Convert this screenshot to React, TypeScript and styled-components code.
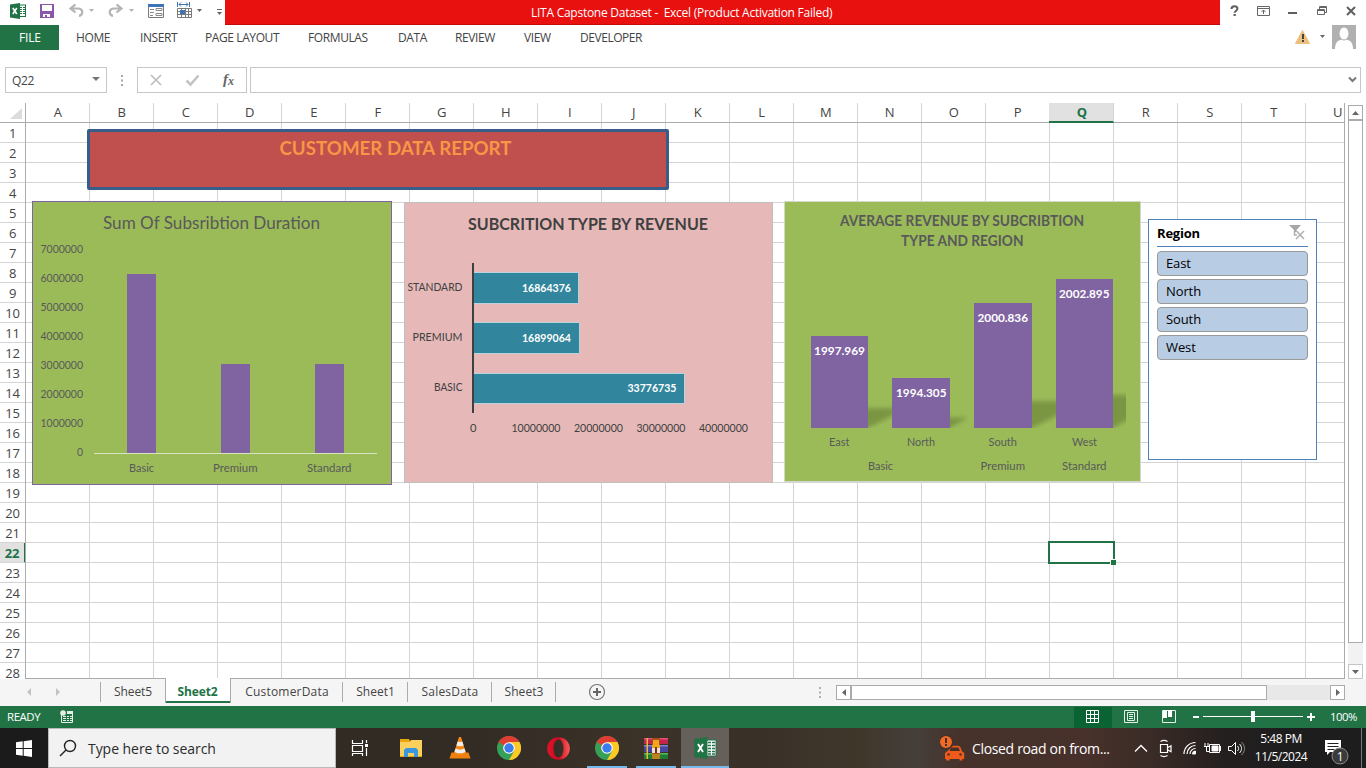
import React from 'react';
import styled, { createGlobalStyle, css } from 'styled-components';

const UI = `"Open Sans", "Noto Sans", sans-serif`;
const BODY = `Lato, "Noto Sans", sans-serif`;
const GREEN = '#217346';

const Global = createGlobalStyle`
  html, body { margin: 0; padding: 0; background: #fff; overflow: hidden; }
  * { box-sizing: border-box; }
`;

const Screen = styled.div`
  width: 1366px;
  height: 768px;
  display: flex;
  flex-direction: column;
  background: #fff;
  font-family: ${UI};
  font-size: 12px;
  color: #444;
  overflow: hidden;
  white-space: nowrap;
`;

const Spaced = styled.span<{ $ls?: number }>`
  letter-spacing: ${(p) => p.$ls ?? 0}px;
`;

/* ---------- title bar ---------- */
const TitleBar = styled.header`
  height: 25px;
  display: flex;
  flex: none;
`;
const QuickAccess = styled.div`
  width: 225px;
`;
const TitleText = styled.div`
  width: 995px;
  height: 25px;
  padding-left: 306px;
  background: #e91010;
  border-bottom: 1px solid #c40a0a;
  color: #fff;
  line-height: 25px;
  white-space: pre;
  letter-spacing: -0.26px;
`;
const WindowButtons = styled.div`
  flex: 1;
`;

/* ---------- ribbon tabs ---------- */
const RibbonTabs = styled.nav`
  height: 25px;
  display: flex;
  flex: none;
  line-height: 25px;
`;
const FileTab = styled.div`
  width: 59px;
  padding-left: 19px;
  background: ${GREEN};
  color: #fff;
  margin-right: 17px;
`;
const RibbonTab = styled.div<{ $w: number; $ls: number }>`
  width: ${(p) => p.$w}px;
  letter-spacing: ${(p) => p.$ls}px;
`;
const Account = styled.div`
  margin-left: auto;
  width: 76px;
`;

/* ---------- formula bar ---------- */
const FormulaBar = styled.div`
  height: 53px;
  flex: none;
  display: flex;
  padding: 17px 5px 0 5px;
`;
const FieldBox = styled.div<{ $w: number; $ml: number }>`
  width: ${(p) => p.$w}px;
  height: 26px;
  margin-left: ${(p) => p.$ml}px;
  border: 1px solid #c6c6c6;
  display: flex;
  align-items: center;
`;
const NameText = styled.span`
  padding-left: 6px;
  width: 86px;
  letter-spacing: -0.3px;
`;
const Dots = styled.div`
  width: 3px;
  margin-left: 14px;
  padding-top: 7px;
  height: 26px;
`;

/* ---------- sheet ---------- */
const SheetArea = styled.main`
  flex: none;
  height: 576px;
  display: flex;
`;
const RowHeads = styled.div`
  width: 26px;
  height: 576px;
  overflow: hidden;
  border-right: 1px solid #ababab;
`;
const Corner = styled.div`
  height: 20px;
  border-bottom: 1px solid #ababab;
`;
const RowHead = styled.div<{ $on?: boolean }>`
  height: 20px;
  line-height: 20px;
  font-size: 13px;
  text-align: center;
  letter-spacing: -0.3px;
  border-bottom: 1px solid #d4d4d4;
  margin-right: ${(p) => (p.$on ? -1 : 0)}px;
  ${(p) => p.$on && css`
    background: #e1e1e1;
    color: ${GREEN};
    font-weight: 700;
    border-right: 2px solid ${GREEN};
  `}
`;
const SheetMain = styled.div`
  width: 1319px;
  display: flex;
  flex-direction: column;
  overflow: hidden;
  border-right: 1px solid #ababab;
`;
const ColHeads = styled.div`
  display: flex;
  height: 20px;
  flex: none;
  border-bottom: 1px solid #ababab;
`;
const ColHead = styled.div<{ $on?: boolean }>`
  width: 64px;
  height: 19px;
  flex: none;
  padding-left: 0.5px;
  font-size: 13px;
  line-height: 19px;
  text-align: center;
  border-right: 1px solid #d4d4d4;
  ${(p) => p.$on && css`
    background: #e1e1e1;
    color: ${GREEN};
    font-weight: 700;
    height: 20px;
    border-bottom: 2px solid ${GREEN};
    margin-left: -1px;
    padding-left: 2px;
    width: 65px;
  `}
`;
const Cells = styled.div`
  position: relative;
  flex: 1;
  border-bottom: 1px solid #ababab;
  background-image:
    repeating-linear-gradient(to right, transparent 0 63px, #d4d4d4 63px 64px),
    repeating-linear-gradient(to bottom, transparent 0 19px, #d4d4d4 19px 20px);
`;
/* Objects that float on the sheet; coordinates are relative to cell A1. */
const Floating = styled.div<{ $x: number; $y: number; $w: number; $h: number }>`
  position: absolute;
  left: ${(p) => p.$x}px;
  top: ${(p) => p.$y}px;
  width: ${(p) => p.$w}px;
  height: ${(p) => p.$h}px;
  svg { display: block; }
`;
const Banner = styled(Floating)`
  background: #c0504d;
  border: 3px solid #385d8a;
  border-radius: 2px;
`;
const Slicer = styled(Floating)`
  background: #fff;
  border: 1px solid #4f81bd;
  padding: 0 8px;
  color: #000;
  font-size: 13px;
`;
const SlicerHead = styled.div`
  height: 27px;
  display: flex;
  justify-content: space-between;
  border-bottom: 1px solid #4f81bd;
  font-weight: 700;
  line-height: 27px;
  margin-bottom: 4px;
`;
const SlicerItem = styled.div<{ $ls: number }>`
  height: 25px;
  margin-bottom: 3px;
  padding-left: 8px;
  line-height: 23px;
  background: #b8cce4;
  border: 1px solid #999;
  border-radius: 4px;
  letter-spacing: ${(p) => p.$ls}px;
`;
const Selection = styled(Floating)`
  border: 2px solid ${GREEN};
`;
const Handle = styled(Floating)`
  background: ${GREEN};
  border: 1px solid #fff;
  border-right: 0;
  border-bottom: 0;
`;
const VScroll = styled.div`
  width: 21px;
  padding: 2px 3px 0;
  display: flex;
  flex-direction: column;
`;
const ScrollButton = styled.div<{ $light?: boolean }>`
  width: 15px;
  height: 15px;
  flex: none;
  background: #fff;
  border: 1px solid ${(p) => (p.$light ? '#c6c6c6' : '#ababab')};
  svg { display: block; }
`;
const VThumb = styled.div`
  height: 523px;
  width: 15px;
  border: 1px solid #ababab;
`;
const VTrack = styled.div`
  width: 15px;
  height: 21px;
  background: #f2f2f2;
`;

/* ---------- sheet tabs ---------- */
const TabBar = styled.div`
  height: 27px;
  flex: none;
  background: #f5f5f5;
  display: flex;
  font-size: 12px;
`;
const SheetTab = styled.div<{ $w: number; $ls: number; $on?: boolean; $sep?: boolean }>`
  width: ${(p) => p.$w}px;
  height: 24px;
  line-height: 25px;
  text-align: center;
  letter-spacing: ${(p) => p.$ls}px;
  background-image: ${(p) => (p.$sep ? 'linear-gradient(#ababab, #ababab)' : 'none')};
  background-size: 1px 20px;
  background-repeat: no-repeat;
  background-position: right 3px;
  svg { display: block; }
  ${(p) => p.$on && css`
    margin-top: -1px;
    height: 25px;
    line-height: 27px;
    padding-right: 1px;
    background: #fff;
    color: ${GREEN};
    font-weight: 700;
    border: solid #ababab;
    border-width: 0 1px 0;
    box-shadow: inset 0 -2px ${GREEN};
    z-index: 1;
  `}
`;
const AddSheet = styled.div`
  width: 280px;
  padding: 4px 0 0 32px;
`;
const HScroll = styled.div`
  display: flex;
  margin-top: 6px;
  height: 15px;
  width: 509px;
  background: #e8e8e8;
`;
const HThumb = styled.div`
  width: 416px;
  background: #fff;
  border: 1px solid #ababab;
  margin-right: auto;
`;

/* ---------- status bar ---------- */
const StatusBar = styled.div`
  height: 22px;
  flex: none;
  background: ${GREEN};
  color: #fff;
  display: flex;
  align-items: center;
  font-size: 11.4px;
`;
const Ready = styled.span`
  padding: 0 0 1px 7px;
  width: 60px;
  letter-spacing: -0.4px;
`;
const StatusRight = styled.div`
  margin-left: auto;
  display: flex;
  align-items: center;
  height: 22px;
`;
const ZoomText = styled.span`
  width: 36px;
  margin-left: -36px;
  padding-bottom: 1px;
  letter-spacing: -0.5px;
`;

/* ---------- taskbar ---------- */
const Taskbar = styled.footer`
  height: 40px;
  flex: none;
  display: flex;
  color: #fff;
  background: linear-gradient(to right, #1b1b1b 0 48px, #322b23 336px, #332c25 480px, #3b3228 640px, #393128 760px,
    #40372b 860px, #453f3b 915px, #46322b 960px, #47312a 1090px, #3a2b26 1150px, #241f1f 1225px, #1d1d1e 1300px);
`;
const Start = styled.div`
  width: 48px;
  padding: 12px 0 0 16px;
`;
const Search = styled.div`
  width: 288px;
  background: #f2f2f2;
  border: 1px solid #b9b9b9;
  color: #2b2b2b;
  font-size: 14px;
  display: flex;
  align-items: center;
`;
const SearchText = styled.span`
  padding-left: 11px;
  letter-spacing: -0.05px;
`;
const AppSlot = styled.div<{ $running?: boolean; $active?: boolean; $first?: boolean }>`
  width: ${(p) => (p.$first ? 50 : 49)}px;
  height: 40px;
  display: flex;
  align-items: center;
  justify-content: center;
  padding-left: ${(p) => (p.$first ? 0 : 1)}px;
  padding-right: ${(p) => (p.$first ? 2 : 0)}px;
  ${(p) => p.$running && css`
    background: linear-gradient(#76b9ed, #76b9ed) 5px bottom / 40px 2px no-repeat;
  `}
  ${(p) => p.$active && css`
    background: linear-gradient(#76b9ed, #76b9ed) left bottom / 48px 2px no-repeat, #65605a;
    width: 48px;
    margin-left: 1px;
    padding-left: 0;
  `}
`;
const News = styled.div`
  display: flex;
  align-items: center;
  margin-left: auto;
  font-size: 14px;
  width: 190px;
  gap: 7px;
  letter-spacing: -0.34px;
`;
const Tray = styled.div`
  width: 119px;
`;
const Clock = styled.div`
  width: 64px;
  padding-top: 2px;
  line-height: 18px;
  font-size: 12px;
  text-align: center;
  letter-spacing: -0.5px;
`;
const Notice = styled.div`
  width: 53px;
  padding-left: 11px;
`;

/* ---------- drawings ---------- */
type TProps = {
  x: number; y: number; w: number; s?: number; c?: string; b?: boolean; children: string;
};
/* Chart text, placed by its left edge and baseline and set to a known width. */
const T = ({ x, y, w, s = 11.7, c = '#595959', b, children }: TProps) => (
  <text x={x} y={y} textLength={w} lengthAdjust="spacingAndGlyphs" fontSize={s} fill={c}
    fontWeight={b ? 700 : 400} fontFamily={BODY}>{children}</text>
);

const XlIcon = () => (
  <svg width="23" height="22" viewBox="0 0 23 22">
    <path d="M12 3h10v16H12z" fill="#fff" stroke={GREEN} />
    <path d="M14 5.500h3M18 5.500h3M14 8.500h3M18 8.500h3M14 11.500h3M18 11.500h3M14 14.500h3M18 14.500h3M14 17h3M18 17h3" stroke={GREEN} strokeWidth="1.500" />
    <path d="M0 2 13.500 0v22L0 20z" fill={GREEN} />
    <path d="m4 7 5 8M9 7l-5 8" stroke="#fff" strokeWidth="1.900" />
  </svg>
);

const QuickIcons = () => (
  <svg width="225" height="25" fill="none">
    <g transform="translate(10 3)">
      <rect x="8" y="2" width="7.5" height="11.5" fill="#fff" stroke={GREEN} />
      <path d="M10 4.5h2M13 4.5h2M10 6.5h2M13 6.5h2M10 8.5h2M13 8.5h2M10 10.5h2M13 10.5h2" stroke={GREEN} />
      <path d="M0 1.4 10 0v16L0 14.4z" fill={GREEN} />
      <path d="m2.8 5 4 6M6.8 5l-4 6" stroke="#fff" strokeWidth="1.6" />
    </g>
    <path d="M40 4h14v14H40z" fill="#8a56ae" />
    <path d="M42 5h10v6H42zM43 14h7v3h-3v-2h-2v2h-2z" fill="#fff" />
    <path d="M75.500 4.500 70.500 8.500 75.500 12.500M71 8.500h7c5.500 0 5.500 7 1 7.300" stroke="#b3b3b3" strokeWidth="2.200" />
    <path d="M89 9h5l-2.500 3z" fill="#b3b3b3" />
    <path d="M116.500 4.500 121.500 8.500 116.500 12.500M121 8.500h-7c-5.500 0-5.500 7-1 7.300" stroke="#b3b3b3" strokeWidth="2.200" />
    <path d="M129 9h5l-2.500 3z" fill="#b3b3b3" />
    <path d="M148.500 4.500h15v13h-15z" stroke="#7b7b7b" />
    <path d="M148 4h16v3h-16z" fill="#3f74b4" />
    <path d="M150 9.500h4M150 12.500h4M150 15.500h3M156 8.500h6v2h-6zM156 13.500h6v2h-6z" stroke="#8a8a8a" />
    <path d="M177.500 2v5M189.500 2v5M179 4.500h9M181 2.500l-2 2 2 2M186 2.500l2 2-2 2" stroke="#3f74b4" />
    <path d="M177.500 8.500h14v9h-14zM177.500 11.500h14M177.500 14.500h14M181.500 8v10M185.500 8v10M188.500 8v10" stroke="#7b7b7b" />
    <path d="M180 10h5v4h-5z" fill="#3f74b4" />
    <path d="M197 9h5l-2.500 3z" fill="#666" />
    <path d="M217 9.500h5" stroke="#666" />
    <path d="M217 12h5l-2.500 3z" fill="#666" />
  </svg>
);

const WindowIcons = () => (
  <svg width="146" height="25" fill="none">
    <path d="M11.500 9c0-3.500 6-3.500 6-.4 0 2.200-2.800 2-2.800 4.200" stroke="#5f5f5f" strokeWidth="2" />
    <path d="M13.500 14h2.300v2h-2.300z" fill="#5f5f5f" />
    <path d="M37.500 6.500h12v9h-12zM37.500 8.500h12M43.500 14v-4M41.500 12l2-2 2 2" stroke="#666" />
    <path d="M68 13h9" stroke="#5f5f5f" strokeWidth="2" />
    <path d="M97.500 9.500h7v5h-7zM97 10.500h8M99.500 9V6.500h7v6H105M99 7.500h8" stroke="#666" />
    <path d="m127 7 8 8M135 7l-8 8" stroke="#5f5f5f" strokeWidth="2" />
  </svg>
);

const AccountIcons = () => (
  <svg width="76" height="25" fill="none">
    <path d="M12.500 5.500 19.500 18.500h-14z" fill="#ecc07c" stroke="#ecc07c" strokeLinejoin="round" />
    <path d="M13 9v5M13 15v2" stroke="#444" strokeWidth="2" />
    <path d="M30 10h5l-2.500 3z" fill="#666" />
    <path d="M42 0h24v24H42z" fill="#b0b0b0" />
    <path d="M45 24c0-7 3-9 9-10 6 1 9 3 9 10z" fill="#fff" />
    <ellipse cx="54" cy="8.500" rx="5" ry="6.500" fill="#fff" stroke="#b0b0b0" />
  </svg>
);

const DotMarks = () => (
  <svg width="3" height="12"><path d="M0 0h2v2H0zM0 4.500h2v2H0zM0 9h2v2H0z" fill="#a6a6a6" /></svg>
);

const Arrow = ({ d, w = 13, h = 13, c = '#666' }: { d: string; w?: number; h?: number; c?: string }) => (
  <svg width={w} height={h}><path d={d} fill={c} /></svg>
);

const DurationChart = () => (
  <svg width="360" height="284" viewBox="32 201 360 284">
    <rect x="32.500" y="201.500" width="359" height="283" fill="#9bbb59" stroke="#8064a2" />
    <T x={103} y={229} w={217} s={18}>Sum Of Subsribtion Duration</T>
    {[7, 6, 5, 4, 3, 2, 1].map((n, i) => (
      <T key={n} x={40.500} y={253 + 29 * i} w={42.500}>{`${n}000000`}</T>
    ))}
    <T x={77} y={456} w={6}>0</T>
    <path d="M127 274h29v179h-29zM221 364h29v89h-29zM315 364h29v89h-29z" fill="#8064a2" />
    <path d="M94 453.500h283" stroke="#d9e3c0" />
    <T x={129} y={472} w={25}>Basic</T>
    <T x={213} y={472} w={44.500}>Premium</T>
    <T x={307} y={472} w={44.500}>Standard</T>
  </svg>
);

const RevenueChart = () => {
  const dark = '#404040';
  return (
    <svg width="369" height="281" viewBox="404 202 369 281">
      <rect x="404.500" y="202.500" width="368" height="280" fill="#e6b9b8" stroke="#bfbfbf" />
      <T x={468} y={230} w={240} s={17.600} c={dark} b>SUBCRITION TYPE BY REVENUE</T>
      <g fill="#31859c" stroke="#b9d3da">
        <path d="M473.500 272.500h105v31h-105zM473.500 322.500h106v31h-106zM473.500 373.500h211v30h-211z" />
      </g>
      <path d="M473 263v150" stroke={dark} strokeWidth="2" />
      <T x={407.500} y={291} w={55} c={dark}>STANDARD</T>
      <T x={412.500} y={341} w={50} c={dark}>PREMIUM</T>
      <T x={434} y={391} w={28.500} c={dark}>BASIC</T>
      <T x={522} y={292} w={49} c="#fff" b>16864376</T>
      <T x={522} y={342} w={49} c="#fff" b>16899064</T>
      <T x={627.500} y={392} w={49} c="#fff" b>33776735</T>
      <T x={470} y={432} w={6.500} c={dark}>0</T>
      {[1, 2, 3, 4].map((n) => (
        <T key={n} x={449 + 62.500 * n} y={432} w={49} c={dark}>{`${n}0000000`}</T>
      ))}
    </svg>
  );
};

const RegionChart = () => (
  <svg width="357" height="281" viewBox="784 201 357 281">
    <defs>
      <filter id="soft" x="-30%" y="-30%" width="160%" height="160%"><feGaussianBlur stdDeviation="2.200" /></filter>
      <clipPath id="plot"><path d="M798 260h328v168H798z" /></clipPath>
    </defs>
    <rect x="784.500" y="201.500" width="356" height="280" fill="#9bbb59" stroke="#d4d8cc" />
    <T x={840} y={226} w={244} s={14.200} b>AVERAGE REVENUE BY SUBCRIBTION</T>
    <T x={901} y={246} w={122.500} s={14.200} b>TYPE AND REGION</T>
    <g clipPath="url(#plot)">
      <g fill="#76903f" opacity=".85" filter="url(#soft)">
        <path d="M811 428h57l40-20h-57zM892 428h58l18-10.500h-58zM974 428h58l54-27h-58zM1056 428h57l60-33h-80z" />
      </g>
    </g>
    <path d="M811 336h57v92h-57zM892 378h58v50h-58zM974 303h58v125h-58zM1056 279h57v149h-57z" fill="#8064a2" />
    <T x={814} y={355} w={51} c="#fff" b>1997.969</T>
    <T x={896} y={397} w={50.500} c="#fff" b>1994.305</T>
    <T x={977.500} y={322} w={50.500} c="#fff" b>2000.836</T>
    <T x={1059} y={298} w={50.500} c="#fff" b>2002.895</T>
    <T x={829} y={446} w={20.500}>East</T>
    <T x={907} y={446} w={28}>North</T>
    <T x={988.500} y={446} w={28.500}>South</T>
    <T x={1072} y={446} w={25}>West</T>
    <T x={868} y={470} w={25}>Basic</T>
    <T x={980.500} y={470} w={44.500}>Premium</T>
    <T x={1062} y={470} w={44.500}>Standard</T>
  </svg>
);

const StatusIcons = () => (
  <svg width="292" height="22" fill="none">
    <path d="M0 1h38v21H0z" fill="#0a6332" />
    <path d="M12.500 4.500h12v12h-12zM12.500 8.500h12M12.500 12.500h12M16.500 4v13M20.500 4v13" stroke="#fff" />
    <path d="M50.500 4.500h13v12h-13zM53.500 6.500h7v8h-7zM55 8.500h4M55 10.500h4M55 12.500h4" stroke="#e4efe8" />
    <path d="M88.500 4.500h13v12h-13z" stroke="#e4efe8" />
    <path d="M89 4h4v8h-4zM94 4h4v7h-4z" fill="#fff" />
    <path d="M119 11h6M233 11h8M237 7v8" stroke="#fff" strokeWidth="2" />
    <path d="M129 10.500h100" stroke="#fff" />
    <path d="M177 5h4v11h-4z" fill="#fff" />
  </svg>
);

const MacroIcon = () => (
  <svg width="14" height="14" fill="none">
    <path d="M1.500 5v7.500h11v-11H7" stroke="#e4efe8" />
    <path d="M7 1h6v3H7z" fill="#e4efe8" />
    <path d="M3 6.500h3M7 6.500h2M10 6.500h2M3 8.500h3M7 8.500h2M10 8.500h2M3 10.500h3M7 10.500h2M10 10.500h2" stroke="#e4efe8" />
    <circle cx="3" cy="3" r="2.800" fill="#e4efe8" />
  </svg>
);

const TaskView = () => (
  <svg width="18" height="18" fill="none" stroke="#fff">
    <path d="M1.500 1v3.500h10V1M1.500 6.500h10v6h-10zM1.500 17v-2.500h10V17M15.500 1v3M15.500 9v8" strokeWidth="1.200" />
    <path d="M14 5h3v3h-3z" fill="#fff" stroke="none" />
  </svg>
);
const Folder = () => (
  <svg width="22" height="20">
    <path d="M0 1h9l1 2h12v16H0z" fill="#e8a50c" />
    <path d="M0 4h10l1-2h11v16H0z" fill="#fbd05c" />
    <path d="M4 19v-7l2-2h10l2 2v7h-4v-4H8v4z" fill="#3a96dd" />
  </svg>
);
const Cone = () => (
  <svg width="22" height="22" viewBox="0 0 22 22">
    <path d="M2.500 15.500h17l2 6h-21z" fill="#f08010" />
    <path d="M10 0h2l5 16c-2 2-10 2-12 0z" fill="#f58a1a" />
    <path d="m8.700 4.500-1.300 4c2 1 5.200 1 7.200 0l-1.300-4c-1.500.7-3.100.7-4.600 0zM6.500 11.500l-1 3.200c3 2 8 2 11 0l-1-3.200c-3 1.500-6 1.500-9 0z" fill="#eee" />
  </svg>
);
const Chrome = () => (
  <svg width="24" height="24" viewBox="0 0 24 24">
    <circle cx="12" cy="12" r="12" fill="#34a058" />
    <path d="M12 12 1.600 6A12 12 0 0 1 22.400 6z" fill="#e03c31" />
    <path d="M12 6h10.400A12 12 0 0 1 12 24l5.200-9z" fill="#fdc925" />
    <path d="M1.600 6 6.800 15 12 12V6z" fill="#e03c31" />
    <path d="M1.600 6 6.800 15 12 17.500 11 13 5 8z" fill="#34a058" />
    <circle cx="12" cy="12" r="5.800" fill="#fff" />
    <circle cx="12" cy="12" r="4.700" fill="#3b7ded" />
  </svg>
);
const Opera = () => (
  <svg width="23" height="23" viewBox="0 0 23 23">
    <defs><linearGradient id="op"><stop offset="0" stopColor="#e8102a" /><stop offset=".5" stopColor="#c80c20" /><stop offset="1" stopColor="#ff5a5a" /></linearGradient></defs>
    <path fillRule="evenodd" fill="url(#op)" d="M11.500.2a11.300 11.300 0 1 0 0 22.600 11.300 11.300 0 0 0 0-22.600zM11.500 2.500c3 0 5 4 5 9s-2 9-5 9-5-4-5-9 2-9 5-9z" />
  </svg>
);
const Rar = () => (
  <svg width="24" height="23">
    <path d="M0 1h24v6H0z" fill="#c2244c" /><path d="M0 1h24v1.500H0z" fill="#e6507a" />
    <path d="M0 8h24v7H0z" fill="#4a45a0" /><path d="M0 8h24v1.500H0z" fill="#8581cf" />
    <path d="M0 16h24v6H0z" fill="#1f7d32" /><path d="M0 16h24v1.500H0z" fill="#57b85f" />
    <path d="M2.500 1h1.500v21H2.500z" fill="#e9b93a" />
    <path d="M8 1h8v21H8z" fill="#a8501c" />
    <path d="M9 3h6v5h1v3H8V8h1z" fill="#f3a51e" />
    <path d="M8 11h8v5H8z" fill="#e9e2d8" /><path d="M11 10h2v6h-2z" fill="#7a2f12" />
    <path d="M8 17h8v5H8z" fill="#b9871f" />
  </svg>
);
const CarAlert = () => (
  <svg width="25" height="26" viewBox="0 0 25 26" fill="none">
    <path d="M13 10.800h5.500l1.700 1 2 4.700 2 1.500v6h-2v1.500h-2.700V24H9.500v1.500H6.200V24H5v-6l2-1.500z" fill="#ee5a1c" />
    <path d="m9.500 16 1.500-3.500h7.500l1.500 3.500z" fill="#46312a" />
    <circle cx="8.500" cy="19.500" r="1.200" fill="#46312a" /><circle cx="20.500" cy="19.500" r="1.200" fill="#46312a" />
    <circle cx="6" cy="7" r="7.500" fill="#46312a" /><circle cx="6" cy="7" r="6" fill="#f26a24" />
    <path d="M6 3v5M6 9v2" stroke="#46312a" strokeWidth="2" />
  </svg>
);
const TrayIcons = () => (
  <svg width="115" height="40" fill="none" stroke="#fff">
    <path d="m5 23.500 6-6 6 6" strokeWidth="1.300" />
    <path d="M30.500 16.500h7v8h-7zM38 19.500l3-1.800v6l-3-1.800M30.500 13.500c2-1.200 5-1.200 7 0M30.500 27.500c2 1.200 5 1.200 7 0" strokeWidth="1.200" />
    <path d="M54 26A11.500 11.500 0 0 1 65.500 14.500M57 26a8.500 8.500 0 0 1 8.500-8.500M60 26a5.500 5.500 0 0 1 5.500-5.500" strokeWidth="1.200" />
    <path d="M62.500 26a3 3 0 0 1 3-3v3z" fill="#fff" />
    <path d="M79.500 16.500h10v8h-10zM90.500 18v5M75 15v3M78 15v3M74 18.500h5M76.500 18v5.500h3" />
    <path d="M82 18h6v5h-6z" fill="#fff" />
    <path d="M98.500 18.500h3l4-4v12l-4-4h-3zM107.500 18c1.500 1.500 1.500 3.500 0 5M109.500 16c2.700 2.700 2.700 6.300 0 9" />
    <path d="M111.500 14c4 4 4 9 0 13" stroke="#888" />
  </svg>
);
const NoticeIcon = () => (
  <svg width="41" height="40" fill="none">
    <path d="M1 12h16v12H6l-3 3v-3H1z" fill="#fff" />
    <path d="M3.500 15.500h11M3.500 18.500h11M3.500 21.500h7" stroke="#222" />
    <circle cx="16" cy="28" r="8" fill="#3b3b3c" stroke="#8a8a8a" />
    <text x="12.800" y="32.500" fontFamily={UI} fontSize="12" fill="#fff">1</text>
    <path d="M37.500 0v40" stroke="#777" />
  </svg>
);

const TABS: [string, number, number][] = [
  ['HOME', 64, -0.4], ['INSERT', 65, -0.4], ['PAGE LAYOUT', 103, -0.4], ['FORMULAS', 90, -0.4],
  ['DATA', 57, -0.4], ['REVIEW', 69, -0.4], ['VIEW', 56, -0.4], ['DEVELOPER', 80, -0.45],
];
const COLS = 'ABCDEFGHIJKLMNOPQRSTU'.split('');
const ROWS = Array.from({ length: 28 }, (_, i) => i + 1);

export default function App() {
  return (
    <Screen>
      <Global />
      <TitleBar>
        <QuickAccess><QuickIcons /></QuickAccess>
        <TitleText>LITA Capstone Dataset -  Excel (Product Activation Failed)</TitleText>
        <WindowButtons><WindowIcons /></WindowButtons>
      </TitleBar>
      <RibbonTabs>
        <FileTab><Spaced $ls={-0.2}>FILE</Spaced></FileTab>
        {TABS.map(([t, w, ls]) => <RibbonTab key={t} $w={w} $ls={ls}>{t}</RibbonTab>)}
        <Account><AccountIcons /></Account>
      </RibbonTabs>
      <FormulaBar>
        <FieldBox $w={102} $ml={0}>
          <NameText>Q22</NameText>
          <Arrow d="M0 0h8l-4 4z" w={8} h={6} c="#777" />
        </FieldBox>
        <Dots><DotMarks /></Dots>
        <FieldBox $w={110} $ml={13}>
          <svg width="108" height="24" fill="none">
            <path d="m13 7 10 10M23 7 13 17" stroke="#bdbdbd" strokeWidth="1.600" />
            <path d="m48.500 12.500 4 4 8-9" stroke="#c3c3c3" strokeWidth="2.600" />
            <text x="85" y="16" fontFamily="Liberation Serif" fontStyle="italic" fontWeight="700" fontSize="15" fill="#666">f</text>
            <text x="90" y="17" fontFamily="Liberation Serif" fontStyle="italic" fontWeight="700" fontSize="12" fill="#666">x</text>
          </svg>
        </FieldBox>
        <FieldBox $w={1111} $ml={3}>
          <svg width="1109" height="24" fill="none"><path d="m1098 9.500 3.500 3.500L1105 9.500" stroke="#777" strokeWidth="2" /></svg>
        </FieldBox>
      </FormulaBar>
      <SheetArea>
        <RowHeads>
          <Corner><svg width="25" height="19"><path d="M22 5v11H10z" fill="#dcdcdc" /></svg></Corner>
          {ROWS.map((r) => <RowHead key={r} $on={r === 22}>{r}</RowHead>)}
        </RowHeads>
        <SheetMain>
          <ColHeads>{COLS.map((c) => <ColHead key={c} $on={c === 'Q'}>{c}</ColHead>)}</ColHeads>
          <Cells>
            <Banner $x={61} $y={6} $w={582} $h={61}>
              <svg width="576" height="55" viewBox="90 132 576 55">
                <T x={279.500} y={155} w={232} s={18.500} c="#f79646" b>CUSTOMER DATA REPORT</T>
              </svg>
            </Banner>
            <Floating $x={6} $y={78} $w={360} $h={284}><DurationChart /></Floating>
            <Floating $x={378} $y={79} $w={369} $h={281}><RevenueChart /></Floating>
            <Floating $x={758} $y={78} $w={357} $h={281}><RegionChart /></Floating>
            <Slicer $x={1122} $y={96} $w={169} $h={241}>
              <SlicerHead>
                <Spaced $ls={-0.2}>Region</Spaced>
                <svg width="19" height="24" fill="none">
                  <path d="M0 5h12L7.500 10v2H5v-2z" fill="#a6a6a6" />
                  <path d="M5.500 11v4H8M7.500 11 15 19M15 11l-8 8" stroke="#b0b0b0" strokeWidth="1.500" />
                </svg>
              </SlicerHead>
              {['East', 'North', 'South', 'West'].map((r) => <SlicerItem key={r} $ls={-0.1}>{r}</SlicerItem>)}
            </Slicer>
            <Selection $x={1022} $y={418} $w={67} $h={23} />
            <Handle $x={1084} $y={436} $w={6} $h={6} />
          </Cells>
        </SheetMain>
        <VScroll>
          <ScrollButton><Arrow d="M3 9h7L6.500 5z" /></ScrollButton>
          <VThumb />
          <VTrack />
          <ScrollButton $light><Arrow d="M3 5h7L6.500 9z" /></ScrollButton>
        </VScroll>
      </SheetArea>
      <TabBar>
        <SheetTab $w={101} $ls={0} $sep>
          <svg width="90" height="24"><path d="M31 9v8l-4-4zM56 9v8l4-4z" fill="#c3c3c3" /></svg>
        </SheetTab>
        <SheetTab $w={64} $ls={-0.1}>Sheet5</SheetTab>
        <SheetTab $w={66} $ls={-0.15} $on>Sheet2</SheetTab>
        <SheetTab $w={112} $ls={0.2} $sep>CustomerData</SheetTab>
        <SheetTab $w={65} $ls={0} $sep>Sheet1</SheetTab>
        <SheetTab $w={84} $ls={0.22} $sep>SalesData</SheetTab>
        <SheetTab $w={64} $ls={0.05} $sep>Sheet3</SheetTab>
        <AddSheet>
          <svg width="233" height="18" fill="none">
            <circle cx="9" cy="9" r="7.500" stroke="#777" strokeWidth="1.200" />
            <path d="M5 9h8M9 5v8" stroke="#666" strokeWidth="2" />
            <path d="M231 4h2v2h-2zM231 8.500h2v2h-2zM231 13h2v2h-2z" fill="#b0b0b0" />
          </svg>
        </AddSheet>
        <HScroll>
          <ScrollButton><Arrow d="M9 3v7L5 6.500z" /></ScrollButton>
          <HThumb />
          <ScrollButton><Arrow d="M5 3v7l4-3.500z" /></ScrollButton>
        </HScroll>
      </TabBar>
      <StatusBar>
        <Ready>READY</Ready>
        <MacroIcon />
        <StatusRight>
          <StatusIcons />
          <ZoomText>100%</ZoomText>
        </StatusRight>
      </StatusBar>
      <Taskbar>
        <Start>
          <svg width="17" height="17"><path d="M0 2.300 6.700 1.300V8H0zM7.700 1.200 16 0v8H7.700zM0 9h6.700v6.700L0 14.700zM7.700 9H16v8l-8.300-1.200z" fill="#fff" /></svg>
        </Start>
        <Search>
          <svg width="28" height="38" fill="none" stroke="#222" strokeWidth="1.400"><circle cx="21" cy="17" r="5.500" /><path d="m17 21-6 6" /></svg>
          <SearchText>Type here to search</SearchText>
        </Search>
        <AppSlot $first><TaskView /></AppSlot>
        <AppSlot><Folder /></AppSlot>
        <AppSlot><Cone /></AppSlot>
        <AppSlot><Chrome /></AppSlot>
        <AppSlot><Opera /></AppSlot>
        <AppSlot $running><Chrome /></AppSlot>
        <AppSlot $running><Rar /></AppSlot>
        <AppSlot $active><XlIcon /></AppSlot>
        <News><CarAlert />Closed road on from...</News>
        <Tray><TrayIcons /></Tray>
        <Clock>5:48 PM<br />11/5/2024</Clock>
        <Notice><NoticeIcon /></Notice>
      </Taskbar>
    </Screen>
  );
}
